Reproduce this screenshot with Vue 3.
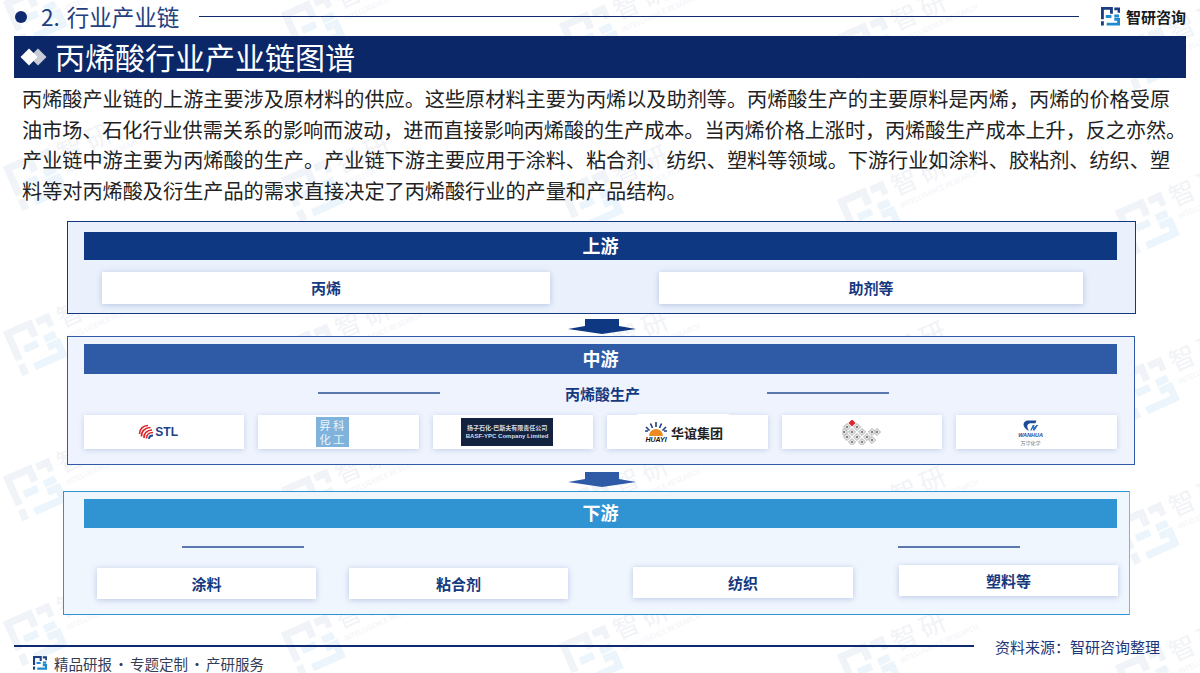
<script setup>
const lines = [
  '丙烯酸产业链的上游主要涉及原材料的供应。这些原材料主要为丙烯以及助剂等。丙烯酸生产的主要原料是丙烯，丙烯的价格受原',
  '油市场、石化行业供需关系的影响而波动，进而直接影响丙烯酸的生产成本。当丙烯价格上涨时，丙烯酸生产成本上升，反之亦然。',
  '产业链中游主要为丙烯酸的生产。产业链下游主要应用于涂料、粘合剂、纺织、塑料等领域。下游行业如涂料、胶粘剂、纺织、塑',
  '料等对丙烯酸及衍生产品的需求直接决定了丙烯酸行业的产量和产品结构。',
]

const downstream = ['涂料', '粘合剂', '纺织', '塑料等']

// faint repeated brand marks behind the page
const rowTops = [-22, 143, 308, 453, 598]
const marks = []
rowTops.forEach((top, row) => {
  for (let col = 0; col < 5; col++) {
    marks.push({
      id: row + '-' + col,
      x: col * 278 - 8,
      y: top + col * 11,
    })
  }
})

// grey diamonds of the sixth logo
const cells = [
  [5, 7], [15, 7], [2, 12], [10, 12], [20, 12], [5, 17], [15, 17], [25, 17], [35, 12],
  [30, 12], [10, 22], [20, 22], [30, 20],
]
</script>

<template>
  <div class="page">
    <div class="marks">
      <div
        v-for="m in marks"
        :key="m.id"
        class="mark"
        :style="{ left: m.x + 'px', top: m.y + 'px' }"
      >
        <svg class="mark-logo" viewBox="0 0 20 20">
          <path class="mark-dark" d="M1.5 13V1.5H11V7" />
          <rect class="mark-dark-fill" x="0" y="15" width="3" height="4.5" />
          <path class="mark-light" d="M5 10H11M6 18H18.5V13H14M14 9.5H19" />
          <path class="mark-dark" d="M14 2H19V6" />
        </svg>
        <div class="mark-text">
          <span class="mark-cn">智研</span>
          <span class="mark-en">INTELLIGENCE RESEARCH</span>
        </div>
      </div>
    </div>

    <div class="content">
      <header class="top">
        <i class="dot"></i>
        <span class="top-title">2. 行业产业链</span>
        <i class="top-line"></i>
        <svg class="brand-logo" viewBox="0 0 20 20">
          <path class="logo-dark" d="M1.5 13V1.5H11V7" />
          <rect class="logo-dark-fill" x="0" y="15" width="3" height="4.5" />
          <path class="logo-blue" d="M5 10H11M6 18H18.5V13H14M14 9.5H19" />
          <path class="logo-dark" d="M14 2H19V6" />
        </svg>
        <span class="brand-name">智研咨询</span>
      </header>

      <div class="title-bar">
        <span class="diamonds"><i class="dia dia-grey"></i><i class="dia dia-white"></i></span>
        <h1>丙烯酸行业产业链图谱</h1>
      </div>

      <div class="para">
        <p v-for="l in lines" :key="l">{{ l }}</p>
      </div>

      <section class="panel up">
        <div class="bar">上游</div>
        <div class="up-cards">
          <div class="card">丙烯</div>
          <div class="card">助剂等</div>
        </div>
      </section>

      <svg class="arrow arrow-up" viewBox="0 0 68 15">
        <polygon points="17,0 51,0 51,7 68,10 34,15 0,10 17,7" />
      </svg>

      <section class="panel mid">
        <div class="bar">中游</div>
        <div class="mid-sub">
          <i class="rule"></i>
          <span>丙烯酸生产</span>
          <i class="rule"></i>
        </div>
        <div class="logos">
          <div class="logo-card stl">
            <svg class="stl-mark" viewBox="0 0 16 16">
              <path class="stl-red" d="M1.5 10C1.5 5 5 1.5 10 1.5M3.5 12.500C3 7.500 7 3.500 12.500 3.500M6 14C5.500 9.500 9 6 14 6M8.500 14.500C8.500 11 11 8.500 15 8.500" />
              <path class="stl-blue" d="M11 15C11 13 12.500 11.500 15 11.500" />
            </svg>
            <span class="stl-text">STL</span>
          </div>
          <div class="logo-card">
            <div class="sk-logo">昇科<br />化工</div>
          </div>
          <div class="logo-card">
            <div class="basf-logo">
              <span>扬子石化-巴斯夫有限责任公司</span>
              <span>BASF-YPC Company Limited</span>
            </div>
          </div>
          <div class="logo-card huayi-card">
            <div class="huayi-mark">
              <svg viewBox="0 0 24 15">
                <path class="hy-rays" d="M12 1V6M6.500 2.500L8.500 7M17.500 2.500L15.500 7M2 6L5.500 9.500M22 6L18.500 9.500M1 10H4M20 10H23" />
                <path class="hy-sun" d="M5 15A7 7 0 0 1 19 15Z" />
              </svg>
              <span>HUAYI</span>
            </div>
            <span class="huayi-name">华谊集团</span>
          </div>
          <div class="logo-card">
            <svg class="hex-logo" viewBox="0 0 40 25">
              <rect
                v-for="(c, i) in cells"
                :key="i"
                class="hex-cell"
                :x="c[0] - 2.500"
                :y="c[1] - 2.500"
                width="5"
                height="5"
                :transform="`rotate(45 ${c[0]} ${c[1]})`"
              />
              <rect class="hex-red" x="7.500" y="0.500" width="5" height="5" transform="rotate(45 10 3)" />
              <circle
                v-for="(c, i) in cells"
                :key="'d' + i"
                class="hex-dot"
                :cx="c[0]"
                :cy="c[1]"
                r="1"
              />
            </svg>
          </div>
          <div class="logo-card wanhua">
            <svg viewBox="0 0 20 13">
              <path class="wh-a" d="M16 1H7C3 1 1 4 2 7C3 10 6 12 8 12C5 9 5 5 9 4H15Z" />
              <path class="wh-b" d="M9 12L12 6H14L13 9L16 6H18L14 12H12L12.500 9L10.500 12Z" />
            </svg>
            <span class="wh-en">WANHUA</span>
            <span class="wh-cn">万华化学</span>
          </div>
        </div>
      </section>

      <svg class="arrow arrow-mid" viewBox="0 0 68 15">
        <polygon points="17,0 51,0 51,7 68,10 34,15 0,10 17,7" />
      </svg>

      <section class="panel down">
        <div class="bar">下游</div>
        <div class="down-rules">
          <i class="rule"></i>
          <i class="rule"></i>
        </div>
        <div class="down-cards">
          <div v-for="d in downstream" :key="d" class="card">{{ d }}</div>
        </div>
      </section>

      <footer class="foot">
        <div class="foot-top">
          <i class="foot-line"></i>
          <span class="source">资料来源：智研咨询整理</span>
        </div>
        <div class="foot-bottom">
          <svg class="foot-logo" viewBox="0 0 20 20">
            <path class="logo-dark" d="M1.5 13V1.500H11V7" />
            <rect class="logo-dark-fill" x="0" y="15" width="3" height="4.500" />
            <path class="logo-blue" d="M5 10H11M6 18H18.500V13H14M14 9.500H19" />
            <path class="logo-dark" d="M14 2H19V6" />
          </svg>
          <span>精品研报 · 专题定制 · 产研服务</span>
        </div>
      </footer>
    </div>
  </div>
</template>

<style>
body {
  background: #fff;
}
</style>

<style scoped>
.page {
  position: relative;
  width: 1200px;
  height: 673px;
  overflow: hidden;
  background: #fff;
  font-family: "Noto Sans CJK SC", "Noto Sans", sans-serif;
}

.marks {
  position: absolute;
  inset: 0;
}

.mark {
  position: absolute;
  display: flex;
  gap: 6px;
  transform: rotate(-24deg);
  transform-origin: left top;
}

.mark-logo {
  width: 50px;
  height: 50px;
  margin-top: 26px;
}

.mark-dark {
  fill: none;
  stroke: #f0f3f7;
  stroke-width: 3;
}

.mark-dark-fill {
  fill: #f0f3f7;
}

.mark-light {
  fill: none;
  stroke: #ebf5fb;
  stroke-width: 3;
}

.mark-text {
  display: flex;
  flex-direction: column;
  margin-top: 20px;
}

.mark-cn {
  font-size: 26px;
  line-height: 32px;
  letter-spacing: 5px;
  color: #f1f3f7;
}

.mark-en {
  font-size: 7px;
  line-height: 10px;
  color: #f1f3f7;
  white-space: nowrap;
}

.content {
  position: relative;
  display: flex;
  flex-direction: column;
  height: 673px;
}

.top {
  display: flex;
  align-items: center;
  height: 33px;
  padding-left: 15px;
  flex: none;
}

.dot {
  width: 12px;
  height: 12px;
  border-radius: 50%;
  background: #0f2b70;
}

.top-title {
  width: 139px;
  margin: -1px 0 0 14px;
  font-size: 22.500px;
  word-spacing: 2px;
  color: #243f80;
  white-space: nowrap;
}

.top-line {
  width: 880px;
  height: 1.500px;
  margin-left: 19px;
  background: #0f2b70;
}

.brand-logo {
  width: 19px;
  height: 19px;
  margin-left: 22px;
}

.logo-dark {
  fill: none;
  stroke: #1c3d80;
  stroke-width: 3;
}

.logo-dark-fill {
  fill: #1c3d80;
}

.logo-blue {
  fill: none;
  stroke: #1f8ad0;
  stroke-width: 3;
}

.brand-name {
  margin-left: 6px;
  font-size: 15px;
  font-weight: 700;
  color: #1a1a1a;
  white-space: nowrap;
}

.title-bar {
  display: flex;
  align-items: center;
  flex: none;
  width: 1172px;
  height: 42px;
  margin: 3px 0 0 14px;
  background: #0b2768;
}

.diamonds {
  position: relative;
  display: block;
  flex: none;
  width: 28px;
  height: 18px;
  margin-left: 6px;
}

.dia {
  position: absolute;
  top: 3px;
  width: 12px;
  height: 12px;
  transform: rotate(45deg);
}

.dia-white {
  left: 3px;
  background: #fff;
}

.dia-grey {
  left: 12px;
  background: #c9ccd4;
}

h1 {
  margin: -3px 0 0 7px;
  font-size: 30px;
  font-weight: 400;
  line-height: 42px;
  color: #fff;
  white-space: nowrap;
}

.para {
  flex: none;
  height: 136px;
  padding: 6px 0 0 22px;
  box-sizing: border-box;
  margin-bottom: 7px;
}

.para p {
  margin: 0;
  font-size: 20.150px;
  line-height: 30.700px;
  color: #222;
  white-space: nowrap;
}

.para p:nth-child(2) {
  letter-spacing: -0.070px;
}

.panel {
  flex: none;
  box-sizing: border-box;
  display: flex;
  flex-direction: column;
}

.bar {
  width: 1033px;
  flex: none;
  text-align: center;
  font-size: 18px;
  font-weight: 700;
  color: #fff;
}

.up {
  width: 1069px;
  height: 93px;
  margin-left: 67px;
  padding: 10px 0 0 16px;
  border: 1px solid #12397f;
  background: #eaf1fc;
}

.up .bar {
  height: 28px;
  line-height: 26px;
  background: #0f3883;
}

.card {
  background: #fff;
  box-shadow: 0 1px 6px rgba(70, 100, 170, 0.320);
  text-align: center;
  font-size: 15px;
  font-weight: 700;
  color: #15397f;
}

.up-cards {
  display: flex;
  gap: 109px;
  margin: 12px 0 0 18px;
}

.up-cards .card {
  width: 448px;
  height: 32px;
  line-height: 32px;
}

.up-cards .card:last-child {
  width: 424px;
}

.arrow {
  display: block;
  flex: none;
  width: 68px;
  height: 15px;
}

.arrow-up {
  margin: 5px 0 2px 568px;
  fill: #0f3883;
}

.arrow-mid {
  margin: 7px 0 4px 568px;
  fill: #2f5ba6;
}

.mid {
  width: 1068px;
  height: 129px;
  margin-left: 67px;
  padding: 7px 0 0 16px;
  border: 1px solid #2f5ba6;
  background: #eef3fd;
}

.mid .bar {
  height: 30px;
  line-height: 28px;
  background: #2f5ba6;
}

.rule {
  display: block;
  width: 122px;
  height: 2px;
  background: #5a78ae;
}

.mid-sub {
  display: flex;
  align-items: center;
  box-sizing: border-box;
  height: 41px;
  padding: 0 0 3px 234px;
  font-size: 15px;
  font-weight: 700;
  color: #15397f;
}

.mid-sub span {
  margin: 0 127px 0 125px;
  white-space: nowrap;
}

.logos {
  display: grid;
  grid-template-columns: repeat(6, 160.300px);
  gap: 14.200px;
}

.logo-card {
  display: flex;
  align-items: center;
  justify-content: center;
  height: 34px;
  background: #fff;
  box-shadow: 0 1px 5px rgba(70, 100, 170, 0.240);
}

.stl {
  padding-right: 12px;
  box-sizing: border-box;
}

.stl-mark {
  width: 16px;
  height: 16px;
}

.stl-red {
  fill: none;
  stroke: #d9262c;
  stroke-width: 1.600;
}

.stl-blue {
  fill: none;
  stroke: #1d4c96;
  stroke-width: 1.800;
}

.stl-text {
  margin-left: 1px;
  font-family: "Liberation Sans", sans-serif;
  font-size: 12px;
  font-weight: 700;
  color: #1c3f86;
}

.sk-logo {
  box-sizing: border-box;
  width: 33px;
  height: 30px;
  margin-right: 13px;
  padding: 1px 0 0 2px;
  background: #7fb3dc;
  text-align: center;
  font-size: 11.500px;
  line-height: 14px;
  letter-spacing: 2.500px;
  color: #eaf3fa;
  white-space: nowrap;
}

.basf-logo {
  display: flex;
  flex-direction: column;
  align-items: center;
  justify-content: center;
  width: 92px;
  height: 28px;
  margin-right: 12px;
  background: #13233f;
  font-size: 6px;
  line-height: 8px;
  font-weight: 700;
  color: #d6dbe4;
  white-space: nowrap;
}

.basf-logo span:last-child {
  font-family: "Liberation Sans", sans-serif;
}

.huayi-card {
  position: relative;
  box-sizing: border-box;
  padding-right: 8px;
}

.huayi-card::before {
  content: '';
  position: absolute;
  left: 30px;
  top: -1px;
  width: 92px;
  height: 2px;
  background: #fff;
}

.huayi-mark {
  display: flex;
  flex-direction: column;
  align-items: center;
  width: 24px;
  margin-right: 3px;
}

.huayi-mark svg {
  width: 24px;
  height: 15px;
}

.hy-rays {
  fill: none;
  stroke: #1f3f80;
  stroke-width: 1.600;
}

.hy-sun {
  fill: #ee8a22;
}

.huayi-mark span {
  font-family: "Liberation Sans", sans-serif;
  font-size: 7px;
  line-height: 7px;
  font-weight: 700;
  font-style: italic;
  color: #111;
}

.huayi-name {
  font-size: 13px;
  font-weight: 700;
  color: #222;
  white-space: nowrap;
}

.hex-logo {
  width: 40px;
  height: 25px;
}

.hex-cell {
  fill: #e4e4e4;
  stroke: #a8a8a8;
  stroke-width: 0.800;
}

.hex-red {
  fill: #d9262c;
}

.hex-dot {
  fill: #666;
}

.wanhua {
  flex-direction: column;
  box-sizing: border-box;
  padding-right: 12px;
}

.wanhua svg {
  width: 18px;
  height: 13px;
}

.wh-a {
  fill: #1d4c96;
}

.wh-b {
  fill: #2b6bb5;
}

.wh-en {
  font-family: "Liberation Sans", sans-serif;
  font-size: 5.500px;
  line-height: 7px;
  font-weight: 700;
  font-style: italic;
  color: #1d4c96;
}

.wh-cn {
  font-size: 5px;
  line-height: 7px;
  color: #777;
}

.down {
  width: 1067px;
  height: 124px;
  margin-left: 63px;
  padding: 7px 0 0 20px;
  border: 1px solid #2f92d2;
  border-right-color: #74b6e4;
  background: #f0f6fe;
}

.down .bar {
  height: 29px;
  line-height: 27px;
  background: #3094d2;
}

.down-rules {
  display: flex;
  align-items: center;
  gap: 594px;
  height: 37px;
  padding-left: 98px;
}

.down-cards {
  display: flex;
  align-items: flex-start;
  padding-left: 13px;
}

.down-cards .card {
  width: 219px;
  height: 31px;
  line-height: 31px;
}

.down-cards .card:nth-child(1) {
  margin-top: 3px;
}

.down-cards .card:nth-child(2) {
  margin: 3px 0 0 33px;
}

.down-cards .card:nth-child(3) {
  width: 220px;
  margin: 2px 0 0 65px;
}

.down-cards .card:nth-child(4) {
  margin-left: 46px;
}

.foot {
  flex: none;
}

.foot-top {
  display: flex;
  align-items: center;
  height: 20px;
  margin: 21px 0 0 14px;
}

.foot-line {
  width: 960px;
  height: 1.500px;
  background: #0f2b70;
}

.source {
  margin-left: 21px;
  font-size: 15px;
  color: #1e3577;
  white-space: nowrap;
}

.foot-bottom {
  display: flex;
  align-items: center;
  height: 14px;
  padding-left: 33px;
  font-size: 14.500px;
  word-spacing: -1.500px;
  color: #333c55;
  white-space: nowrap;
}

.foot-logo {
  width: 14px;
  height: 14px;
  margin-right: 7px;
}
</style>
